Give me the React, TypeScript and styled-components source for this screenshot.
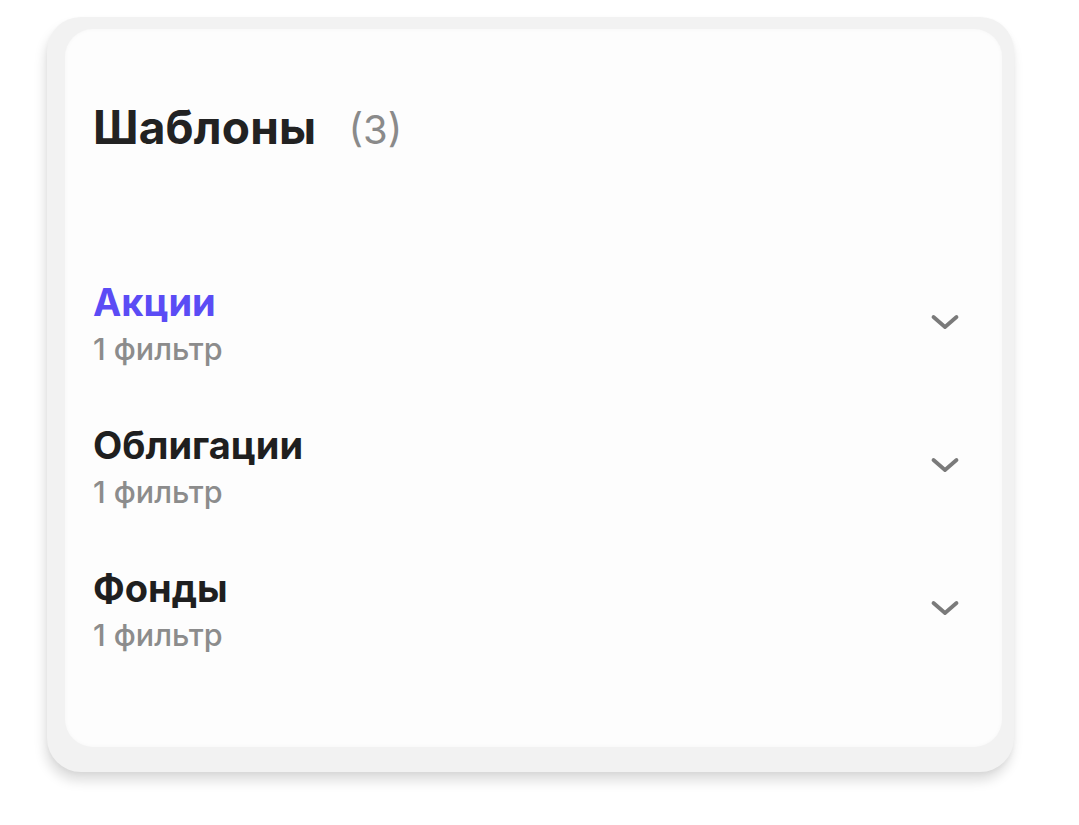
import React from "react";
import styled, { createGlobalStyle } from "styled-components";

const Global = createGlobalStyle`
  html, body { margin: 0; padding: 0; background: #ffffff; }
  body { font-family: Inter, "Noto Sans", sans-serif; -webkit-font-smoothing: antialiased; }
`;

const Page = styled.div`
  width: 1079px;
  height: 825px;
  padding: 17px 0 0 47px;
  box-sizing: border-box;
`;

const Frame = styled.div`
  width: 967px;
  height: 755px;
  box-sizing: border-box;
  padding: 12px 12px 25px 18px;
  background: #f2f2f2;
  border-radius: 34px;
  box-shadow: -2px 9px 12px rgba(0, 0, 0, 0.13), 0 2px 4px rgba(0, 0, 0, 0.04);
  display: flex;
`;

const Card = styled.div`
  flex: 1;
  background: #fdfdfd;
  border-radius: 28px;
  box-shadow: inset 0 0 4px rgba(0, 0, 0, 0.03);
  padding: 71px 42px 0 28px;
  display: flex;
  flex-direction: column;
`;

const Header = styled.div`
  display: flex;
  align-items: baseline;
  gap: 32px;
  margin-bottom: 126px;
`;

const Title = styled.h1`
  margin: 0;
  font-size: 46px;
  line-height: 54px;
  font-weight: 700;
  color: #222222;
  letter-spacing: 0.2px;
`;

const Count = styled.span`
  font-size: 40px;
  font-weight: 400;
  color: #8a8a8a;
`;

const List = styled.div`
  display: flex;
  flex-direction: column;
  gap: 56px;
`;

const Row = styled.div`
  display: flex;
  align-items: center;
  justify-content: space-between;
`;

const Texts = styled.div`
  display: flex;
  flex-direction: column;
  gap: 7px;
`;

const Name = styled.div<{ $active?: boolean }>`
  font-size: 38px;
  line-height: 44px;
  font-weight: 700;
  color: ${(p) => (p.$active ? "#5b4cf5" : "#1f1f1f")};
`;

const Sub = styled.div`
  font-size: 30.5px;
  line-height: 36px;
  font-weight: 500;
  color: #8c8c8c;
`;

const Chevron = styled.svg`
  width: 30px;
  height: 16px;
  flex: none;
  margin-top: -3px;
`;

const items = [
  { name: "Акции", sub: "1 фильтр", active: true },
  { name: "Облигации", sub: "1 фильтр" },
  { name: "Фонды", sub: "1 фильтр" },
];

export default function App() {
  return (
    <>
      <Global />
      <Page>
        <Frame>
          <Card>
            <Header>
              <Title>Шаблоны</Title>
              <Count>(3)</Count>
            </Header>
            <List>
              {items.map((it) => (
                <Row key={it.name}>
                  <Texts>
                    <Name $active={it.active}>{it.name}</Name>
                    <Sub>{it.sub}</Sub>
                  </Texts>
                  <Chevron viewBox="0 0 30 16">
                    <path
                      d="M3.5 3 L15 13 L26.5 3"
                      fill="none"
                      stroke="#7a7a7a"
                      strokeWidth="3.8"
                      strokeLinecap="round"
                      strokeLinejoin="round"
                    />
                  </Chevron>
                </Row>
              ))}
            </List>
          </Card>
        </Frame>
      </Page>
    </>
  );
}
